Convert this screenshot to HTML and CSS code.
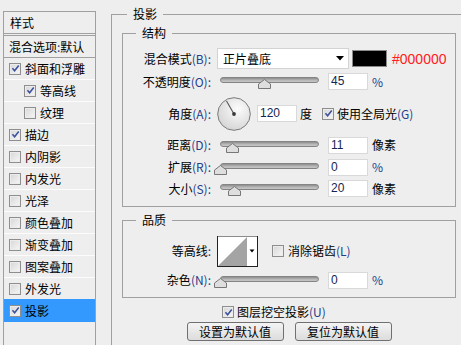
FILE: index.html
```html
<!DOCTYPE html>
<html lang="zh-CN">
<head>
<meta charset="utf-8">
<title>图层样式 - 投影</title>
<link rel="stylesheet" href="styles.css">
</head>
<body>
<div class="app">
  <aside class="styles-panel">
    <div class="panel-head">样式</div>
    <div class="panel-blend">混合选项<span class="key">:</span>默认</div>
    <ul class="fx-list">
      <li class="fx-item"><span class="cb"><svg class="tick" viewBox="0 0 10 10"><path d="M1.6 4.8 L4 7.6 L8.6 1.6"/></svg></span>斜面和浮雕</li>
      <li class="fx-item sub"><span class="cb"><svg class="tick" viewBox="0 0 10 10"><path d="M1.6 4.8 L4 7.6 L8.6 1.6"/></svg></span>等高线</li>
      <li class="fx-item sub"><span class="cb"></span>纹理</li>
      <li class="fx-item"><span class="cb"><svg class="tick" viewBox="0 0 10 10"><path d="M1.6 4.8 L4 7.6 L8.6 1.6"/></svg></span>描边</li>
      <li class="fx-item"><span class="cb"></span>内阴影</li>
      <li class="fx-item"><span class="cb"></span>内发光</li>
      <li class="fx-item"><span class="cb"></span>光泽</li>
      <li class="fx-item"><span class="cb"></span>颜色叠加</li>
      <li class="fx-item"><span class="cb"></span>渐变叠加</li>
      <li class="fx-item"><span class="cb"></span>图案叠加</li>
      <li class="fx-item"><span class="cb"></span>外发光</li>
      <li class="fx-item selected"><span class="cb"><svg class="tick" viewBox="0 0 10 10"><path d="M1.6 4.8 L4 7.6 L8.6 1.6"/></svg></span>投影</li>
    </ul>
  </aside>

  <main class="settings">
    <fieldset class="group outer">
      <legend>投影</legend>

      <fieldset class="group sub-group">
        <legend>结构</legend>
        <div class="form-grid structure-grid">
          <div class="lbl">混合模式<span class="key">(B):</span></div>
          <div class="ctrl">
            <div class="select"><span>正片叠底</span><svg class="arrow" width="8" height="5" viewBox="0 0 8 5"><polygon points="0,0 8,0 4,4.5" fill="#000"/></svg></div>
            <div class="swatch"></div>
            <span class="hex">#000000</span>
          </div>

          <div class="lbl">不透明度<span class="key">(O):</span></div>
          <div class="ctrl">
            <div class="slider"><div class="track"></div><svg class="handle" style="left:38px" width="13" height="10" viewBox="0 0 13 10"><polygon points="6.5,0.5 12.5,5 12.5,9.5 0.5,9.5 0.5,5" fill="#dedede" stroke="#777"/></svg></div>
            <div class="num">45</div>
            <span class="unit key">%</span>
          </div>

          <div class="lbl">角度<span class="key">(A):</span></div>
          <div class="ctrl">
            <svg class="dial" width="34" height="34" viewBox="0 0 34 34">
              <defs><radialGradient id="dialGrad" cx="0.62" cy="0.35" r="0.75"><stop offset="0" stop-color="#fcfcfc"/><stop offset="1" stop-color="#d2d2d2"/></radialGradient></defs>
              <circle cx="17" cy="17" r="16.3" fill="url(#dialGrad)" stroke="#7a7a7a"/>
              <line x1="17" y1="17" x2="9.5" y2="4" stroke="#555" stroke-width="1.1"/>
              <circle cx="17" cy="17" r="1.9" fill="#3a3a3a"/>
            </svg>
            <div class="num angle">120</div>
            <span class="unit deg">度</span>
            <label class="chk global"><span class="cb"><svg class="tick" viewBox="0 0 10 10"><path d="M1.6 4.8 L4 7.6 L8.6 1.6"/></svg></span><span>使用全局光<span class="key">(G)</span></span></label>
          </div>

          <div class="lbl">距离<span class="key">(D):</span></div>
          <div class="ctrl">
            <div class="slider"><div class="track"></div><svg class="handle" style="left:6px" width="13" height="10" viewBox="0 0 13 10"><polygon points="6.5,0.5 12.5,5 12.5,9.5 0.5,9.5 0.5,5" fill="#dedede" stroke="#777"/></svg></div>
            <div class="num">11</div>
            <span class="unit">像素</span>
          </div>

          <div class="lbl">扩展<span class="key">(R):</span></div>
          <div class="ctrl">
            <div class="slider"><div class="track"></div><svg class="handle" style="left:-6px" width="13" height="10" viewBox="0 0 13 10"><polygon points="6.5,0.5 12.5,5 12.5,9.5 0.5,9.5 0.5,5" fill="#dedede" stroke="#777"/></svg></div>
            <div class="num">0</div>
            <span class="unit key">%</span>
          </div>

          <div class="lbl">大小<span class="key">(S):</span></div>
          <div class="ctrl">
            <div class="slider"><div class="track"></div><svg class="handle" style="left:8px" width="13" height="10" viewBox="0 0 13 10"><polygon points="6.5,0.5 12.5,5 12.5,9.5 0.5,9.5 0.5,5" fill="#dedede" stroke="#777"/></svg></div>
            <div class="num">20</div>
            <span class="unit">像素</span>
          </div>
        </div>
      </fieldset>

      <fieldset class="group sub-group quality">
        <legend>品质</legend>
        <div class="form-grid quality-grid">
          <div class="lbl">等高线<span class="key">:</span></div>
          <div class="ctrl">
            <svg class="contour" width="41" height="31" viewBox="0 0 41 31">
              <rect x="0" y="0" width="41" height="31" fill="#fff"/>
              <polygon points="1,30 30,1 30,30" fill="#a4a4a4"/>
              <line x1="0" y1="0.5" x2="41" y2="0.5" stroke="#8c8c8c"/>
              <line x1="0.5" y1="0" x2="0.5" y2="31" stroke="#222"/>
              <line x1="0" y1="30.5" x2="41" y2="30.5" stroke="#222"/>
              <line x1="40.5" y1="0" x2="40.5" y2="31" stroke="#222"/>
              <polygon points="32.5,13.5 37.5,13.5 35,16.5" fill="#000"/>
            </svg>
            <label class="chk aa"><span class="cb"></span><span>消除锯齿<span class="key">(L)</span></span></label>
          </div>

          <div class="lbl">杂色<span class="key">(N):</span></div>
          <div class="ctrl">
            <div class="slider"><div class="track"></div><svg class="handle" style="left:-6px" width="13" height="10" viewBox="0 0 13 10"><polygon points="6.5,0.5 12.5,5 12.5,9.5 0.5,9.5 0.5,5" fill="#dedede" stroke="#777"/></svg></div>
            <div class="num">0</div>
            <span class="unit key">%</span>
          </div>
        </div>
      </fieldset>

      <div class="knockout">
        <label class="chk"><span class="cb"><svg class="tick" viewBox="0 0 10 10"><path d="M1.6 4.8 L4 7.6 L8.6 1.6"/></svg></span><span>图层挖空投影<span class="key">(U)</span></span></label>
      </div>

      <div class="buttons">
        <button class="btn" type="button">设置为默认值</button>
        <button class="btn" type="button">复位为默认值</button>
      </div>
    </fieldset>
  </main>
</div>
</body>
</html>
```
FILE: styles.css
```css
* { box-sizing: border-box; }

html, body {
  margin: 0;
  padding: 0;
}

body {
  width: 461px;
  height: 345px;
  overflow: hidden;
  background: #eeeeee;
  font-family: "Noto Sans CJK SC", "Microsoft YaHei", sans-serif;
  font-size: 12px;
  line-height: 16px;
  color: #000;
}

.app {
  display: flex;
  height: 345px;
}

/* ---------- left styles list ---------- */
.styles-panel {
  flex: none;
  width: 93px;
  margin: 11px 0 0 3px;
  border: 1px solid #a0a0a0;
  border-bottom: none;
}

.panel-head {
  height: 22px;
  line-height: 21px;
  padding-left: 6px;
  border-bottom: 1px solid #a0a0a0;
}

.panel-blend {
  margin-top: 1px;
  height: 23px;
  line-height: 21px;
  padding-left: 5px;
  border-top: 1px solid #a0a0a0;
  border-bottom: 1px solid #a0a0a0;
  white-space: nowrap;
}

.fx-list {
  list-style: none;
  margin: 0;
  padding: 0;
}

.fx-item {
  height: 22px;
  display: flex;
  align-items: center;
  gap: 4px;
  padding-left: 5px;
  border-bottom: 1px solid #fcfcfc;
  white-space: nowrap;
}

.fx-item.sub { padding-left: 20px; }

.fx-item.selected {
  background: #3399ff;
  border-bottom-color: #3399ff;
  box-shadow: 0 -1px 0 #3399ff;
}

/* ---------- checkbox ---------- */
.cb {
  flex: none;
  width: 12px;
  height: 12px;
  border: 1px solid #8e8e8e;
  background: linear-gradient(135deg, #d6d6d6, #f7f7f7);
  box-shadow: inset 0 0 0 1px #ececec;
  display: flex;
  align-items: center;
  justify-content: center;
}

.tick {
  width: 9px;
  height: 9px;
  fill: none;
  stroke: #3b4f9e;
  stroke-width: 1.7;
}

.chk {
  display: flex;
  align-items: center;
  gap: 3px;
  white-space: nowrap;
}

.key { color: #24408a; }

/* ---------- group boxes ---------- */
.settings {
  flex: 1;
  min-width: 0;
  display: flex;
  margin: 6px 0 0 15px;
}

.group {
  margin: 0;
  padding: 0;
  min-width: 0;
  border: 1px solid #a0a0a0;
}

.group > legend {
  padding: 0 6px;
  line-height: 16px;
  font-size: 12px;
}

.outer {
  flex: 1;
  border-right: none;
  border-bottom: none;
  padding: 3px 0 0 10px;
}

.outer > legend { margin-left: 5px; }

.sub-group {
  width: 334px;
  padding: 6px 0 7px 0;
}

.sub-group > legend { margin-left: 13px; }

.quality {
  margin-top: 5px;
  padding: 6px 0 5px 0;
}

/* ---------- forms ---------- */
.form-grid {
  display: grid;
  grid-template-columns: 94px auto;
  align-items: center;
}

.structure-grid { grid-template-rows: 23px 23px 41px 22px 22px 21px; }
.quality-grid { grid-template-rows: 34px 24px; }

.lbl {
  text-align: right;
  padding-right: 6px;
  white-space: nowrap;
}

.ctrl {
  display: flex;
  align-items: center;
  white-space: nowrap;
}

.select {
  width: 132px;
  height: 21px;
  background: #fff;
  border: 1px solid #d3d3d3;
  display: flex;
  align-items: center;
  justify-content: space-between;
  padding: 0 4px 0 5px;
}

.swatch {
  width: 35px;
  height: 17px;
  margin-left: 3px;
  background: #000;
  border: 1px solid #8a8a8a;
}

.hex {
  margin-left: 5px;
  font-family: "Liberation Sans", Arial, sans-serif;
  font-size: 14px;
  color: #ff2020;
}

.slider {
  position: relative;
  flex: none;
  width: 99px;
  height: 12px;
  margin: 3px 0 0 3px;
}

.track {
  height: 6px;
  border-radius: 3px;
  border: 1px solid #848484;
  background: linear-gradient(#8e8e8e, #b9b9b9 60%, #c6c6c6);
}

.handle {
  position: absolute;
  top: 2px;
}

.num {
  flex: none;
  width: 40px;
  height: 17px;
  margin-left: 9px;
  padding-left: 2px;
  background: #fff;
  border: 1px solid #d9d9d9;
  font-family: "Liberation Sans", Arial, sans-serif;
  font-size: 12px;
  line-height: 15px;
  color: #14264f;
}

.unit { margin-left: 4px; }

.dial { flex: none; }

.num.angle { margin-left: 6px; }
.unit.deg { margin-left: 3px; }
.chk.global { margin-left: 10px; }

.contour { flex: none; }
.chk.aa { margin-left: 14px; gap: 4px; }

.knockout {
  margin-top: 5px;
  height: 18px;
  display: flex;
  align-items: center;
  padding-left: 100px;
}

.buttons {
  width: 334px;
  margin-top: 1px;
  display: flex;
  justify-content: center;
  gap: 11px;
}

.btn {
  width: 97px;
  height: 19px;
  padding: 0;
  border: 1px solid #707070;
  border-radius: 3px;
  background: linear-gradient(#f4f4f4, #dcdcdc);
  font-family: "Noto Sans CJK SC", "Microsoft YaHei", sans-serif;
  font-size: 12px;
  line-height: 17px;
  color: #000;
}
```
